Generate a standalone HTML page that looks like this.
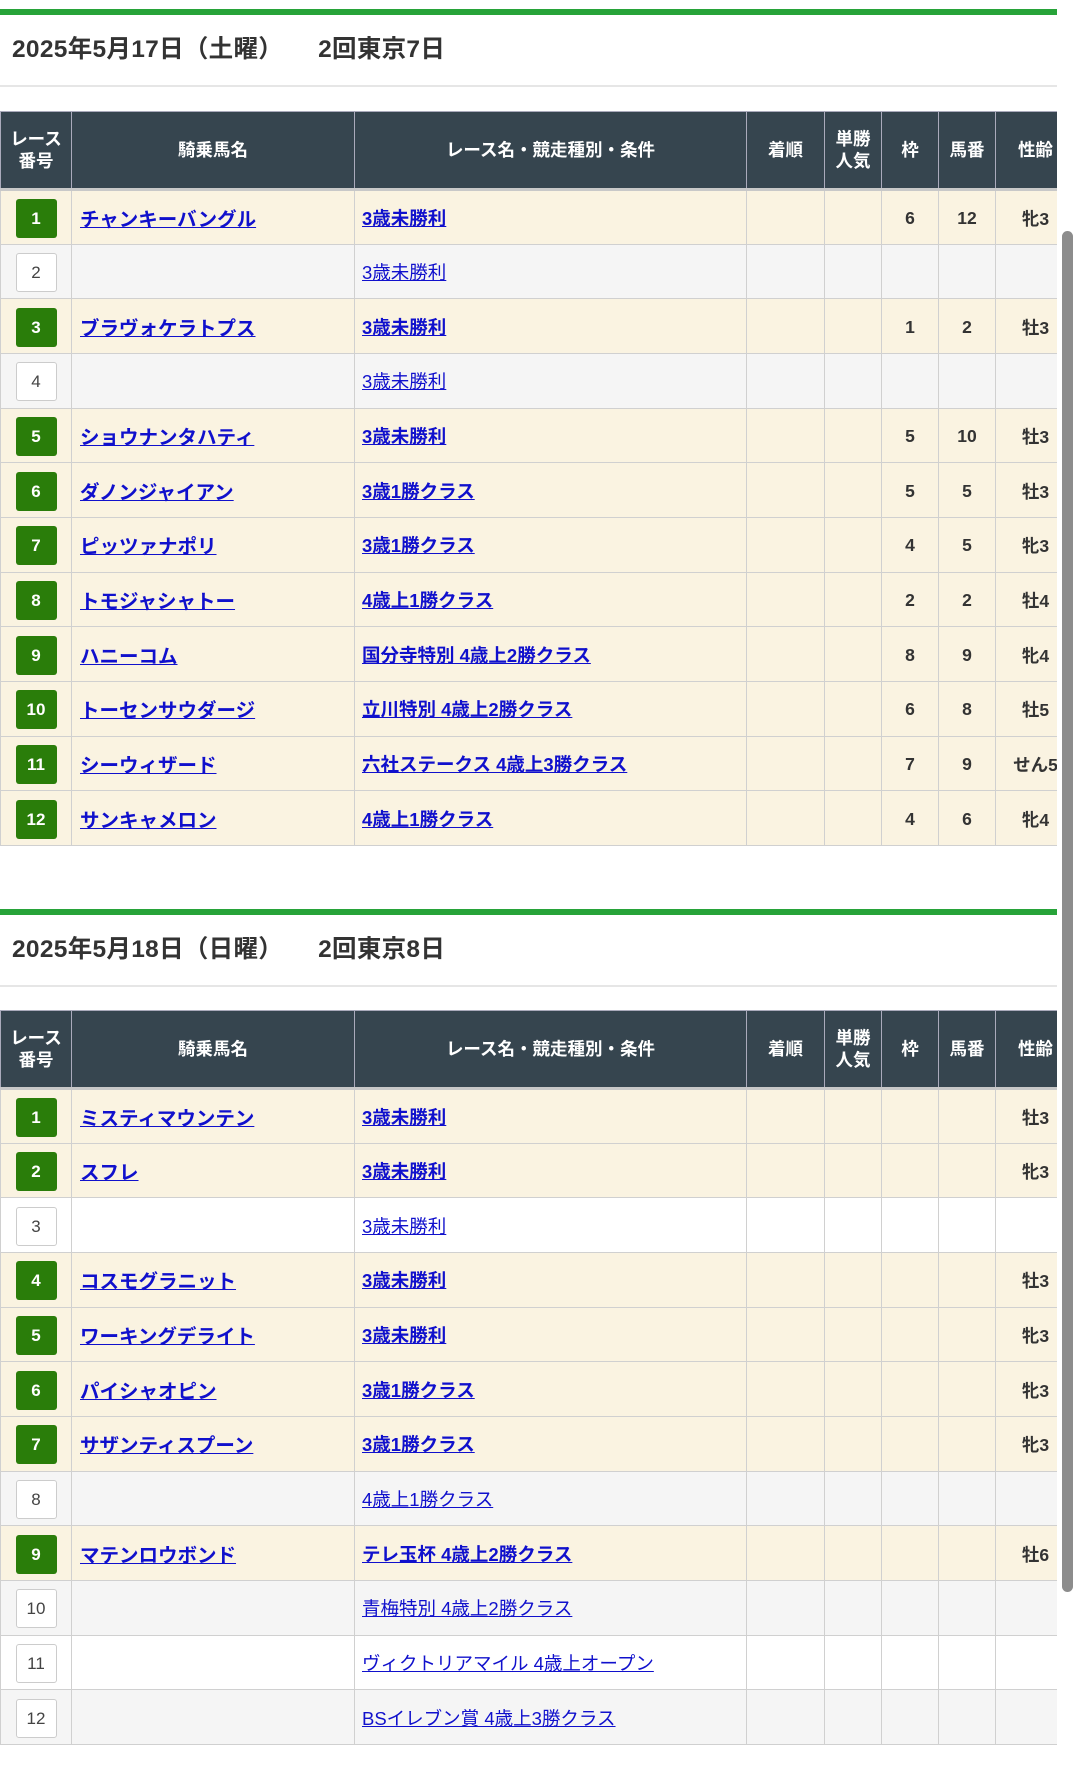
<!DOCTYPE html>
<html><head><meta charset="utf-8">
<style>
*{margin:0;padding:0;box-sizing:border-box}
html,body{width:1080px;height:1765px;background:#fff;overflow:hidden;font-family:"Liberation Sans","Noto Sans CJK JP",sans-serif;color:#333}
.sec{position:absolute;left:0;width:1057px}
.bar{height:6px;background:#27a339}
.title{height:72px;border-bottom:2px solid #e6e6e6;font-size:24.5px;font-weight:bold;padding-left:12px;line-height:70px;color:#333;letter-spacing:0.3px}
.title span{margin-left:35px}
.wrap{position:absolute;left:0;width:1057px;overflow:hidden}
table{width:1075px;border-collapse:collapse;table-layout:fixed}
th{background:#36454f;color:#fff;font-size:17.5px;font-weight:bold;height:78px;border:1px solid #aab;border-bottom:3px solid #c8c8c8;line-height:22px;text-align:center}
td{height:54.67px;border:1px solid #d0d0d0;font-size:17.5px;text-align:center;vertical-align:middle;font-weight:bold;color:#333;padding-top:2px}
tr.a td{background:#faf3e1}
tr.g td{background:#f5f5f5}
tr.w td{background:#fff}
td.n{text-align:left;padding-left:8px;padding-top:0}
td.r{text-align:left;padding-left:7px;padding-top:1px}
a{color:#1010cc;text-decoration:underline}
td.n a{font-size:19.5px;font-weight:bold}
td.r a{font-size:18.5px;font-weight:bold}
tr.g td.r a,tr.w td.r a{font-weight:normal}
.b{display:inline-block;width:41px;height:39px;line-height:39px;border-radius:3px;font-size:17px}
.bg{background:#2a7d0a;color:#fff;font-weight:bold}
.bw{background:#fff;border:1px solid #ccc;color:#444;font-weight:normal;line-height:37px}
td.s{white-space:nowrap;overflow:hidden}
.sb{position:absolute;left:1062px;top:231px;width:11px;height:1361px;background:#8c8c8c;border-radius:6px}
</style></head><body>

<div class="sec" style="top:9px"><div class="bar"></div><div class="title">2025年5月17日（土曜）<span>2回東京7日</span></div></div>
<div class="wrap" style="top:111px"><table>
<colgroup><col style="width:71px"><col style="width:283px"><col style="width:392px"><col style="width:78px"><col style="width:57px"><col style="width:57px"><col style="width:57px"><col style="width:80px"></colgroup>
<tr><th>レース<br>番号</th><th>騎乗馬名</th><th>レース名・競走種別・条件</th><th>着順</th><th>単勝<br>人気</th><th>枠</th><th>馬番</th><th>性齢</th></tr>
<tr class="a"><td><span class="b bg">1</span></td><td class="n"><a>チャンキーバングル</a></td><td class="r"><a>3歳未勝利</a></td><td></td><td></td><td>6</td><td>12</td><td class="s">牝3</td></tr>
<tr class="g"><td><span class="b bw">2</span></td><td class="n"></td><td class="r"><a>3歳未勝利</a></td><td></td><td></td><td></td><td></td><td></td></tr>
<tr class="a"><td><span class="b bg">3</span></td><td class="n"><a>ブラヴォケラトプス</a></td><td class="r"><a>3歳未勝利</a></td><td></td><td></td><td>1</td><td>2</td><td class="s">牡3</td></tr>
<tr class="g"><td><span class="b bw">4</span></td><td class="n"></td><td class="r"><a>3歳未勝利</a></td><td></td><td></td><td></td><td></td><td></td></tr>
<tr class="a"><td><span class="b bg">5</span></td><td class="n"><a>ショウナンタハティ</a></td><td class="r"><a>3歳未勝利</a></td><td></td><td></td><td>5</td><td>10</td><td class="s">牡3</td></tr>
<tr class="a"><td><span class="b bg">6</span></td><td class="n"><a>ダノンジャイアン</a></td><td class="r"><a>3歳1勝クラス</a></td><td></td><td></td><td>5</td><td>5</td><td class="s">牡3</td></tr>
<tr class="a"><td><span class="b bg">7</span></td><td class="n"><a>ピッツァナポリ</a></td><td class="r"><a>3歳1勝クラス</a></td><td></td><td></td><td>4</td><td>5</td><td class="s">牝3</td></tr>
<tr class="a"><td><span class="b bg">8</span></td><td class="n"><a>トモジャシャトー</a></td><td class="r"><a>4歳上1勝クラス</a></td><td></td><td></td><td>2</td><td>2</td><td class="s">牡4</td></tr>
<tr class="a"><td><span class="b bg">9</span></td><td class="n"><a>ハニーコム</a></td><td class="r"><a>国分寺特別 4歳上2勝クラス</a></td><td></td><td></td><td>8</td><td>9</td><td class="s">牝4</td></tr>
<tr class="a"><td><span class="b bg">10</span></td><td class="n"><a>トーセンサウダージ</a></td><td class="r"><a>立川特別 4歳上2勝クラス</a></td><td></td><td></td><td>6</td><td>8</td><td class="s">牡5</td></tr>
<tr class="a"><td><span class="b bg">11</span></td><td class="n"><a>シーウィザード</a></td><td class="r"><a>六社ステークス 4歳上3勝クラス</a></td><td></td><td></td><td>7</td><td>9</td><td class="s">せん5</td></tr>
<tr class="a"><td><span class="b bg">12</span></td><td class="n"><a>サンキャメロン</a></td><td class="r"><a>4歳上1勝クラス</a></td><td></td><td></td><td>4</td><td>6</td><td class="s">牝4</td></tr>
</table></div>

<div class="sec" style="top:909px"><div class="bar"></div><div class="title">2025年5月18日（日曜）<span>2回東京8日</span></div></div>
<div class="wrap" style="top:1010px"><table>
<colgroup><col style="width:71px"><col style="width:283px"><col style="width:392px"><col style="width:78px"><col style="width:57px"><col style="width:57px"><col style="width:57px"><col style="width:80px"></colgroup>
<tr><th>レース<br>番号</th><th>騎乗馬名</th><th>レース名・競走種別・条件</th><th>着順</th><th>単勝<br>人気</th><th>枠</th><th>馬番</th><th>性齢</th></tr>
<tr class="a"><td><span class="b bg">1</span></td><td class="n"><a>ミスティマウンテン</a></td><td class="r"><a>3歳未勝利</a></td><td></td><td></td><td></td><td></td><td class="s">牡3</td></tr>
<tr class="a"><td><span class="b bg">2</span></td><td class="n"><a>スフレ</a></td><td class="r"><a>3歳未勝利</a></td><td></td><td></td><td></td><td></td><td class="s">牝3</td></tr>
<tr class="w"><td><span class="b bw">3</span></td><td class="n"></td><td class="r"><a>3歳未勝利</a></td><td></td><td></td><td></td><td></td><td></td></tr>
<tr class="a"><td><span class="b bg">4</span></td><td class="n"><a>コスモグラニット</a></td><td class="r"><a>3歳未勝利</a></td><td></td><td></td><td></td><td></td><td class="s">牡3</td></tr>
<tr class="a"><td><span class="b bg">5</span></td><td class="n"><a>ワーキングデライト</a></td><td class="r"><a>3歳未勝利</a></td><td></td><td></td><td></td><td></td><td class="s">牝3</td></tr>
<tr class="a"><td><span class="b bg">6</span></td><td class="n"><a>パイシャオピン</a></td><td class="r"><a>3歳1勝クラス</a></td><td></td><td></td><td></td><td></td><td class="s">牝3</td></tr>
<tr class="a"><td><span class="b bg">7</span></td><td class="n"><a>サザンティスプーン</a></td><td class="r"><a>3歳1勝クラス</a></td><td></td><td></td><td></td><td></td><td class="s">牝3</td></tr>
<tr class="g"><td><span class="b bw">8</span></td><td class="n"></td><td class="r"><a>4歳上1勝クラス</a></td><td></td><td></td><td></td><td></td><td></td></tr>
<tr class="a"><td><span class="b bg">9</span></td><td class="n"><a>マテンロウボンド</a></td><td class="r"><a>テレ玉杯 4歳上2勝クラス</a></td><td></td><td></td><td></td><td></td><td class="s">牡6</td></tr>
<tr class="g"><td><span class="b bw">10</span></td><td class="n"></td><td class="r"><a>青梅特別 4歳上2勝クラス</a></td><td></td><td></td><td></td><td></td><td></td></tr>
<tr class="w"><td><span class="b bw">11</span></td><td class="n"></td><td class="r"><a>ヴィクトリアマイル 4歳上オープン</a></td><td></td><td></td><td></td><td></td><td></td></tr>
<tr class="g"><td><span class="b bw">12</span></td><td class="n"></td><td class="r"><a>BSイレブン賞 4歳上3勝クラス</a></td><td></td><td></td><td></td><td></td><td></td></tr>
</table></div>
<div style="position:absolute;left:1057px;top:0;width:23px;height:1765px;background:#fff"></div>
<div class="sb"></div>
</body></html>
